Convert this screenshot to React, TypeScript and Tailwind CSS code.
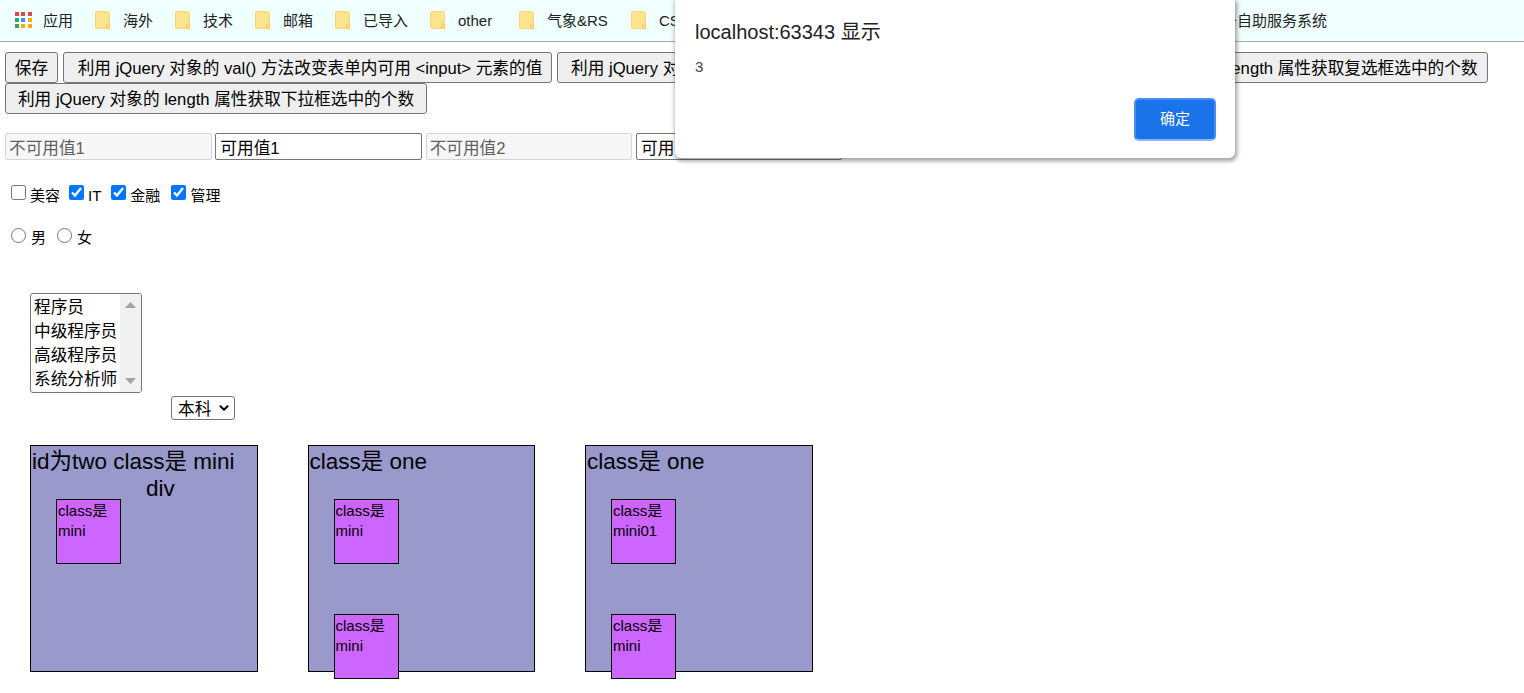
import { ChevronDown } from "lucide-react";

const cjk = "font-['Liberation_Sans','Noto_Sans_CJK_SC',sans-serif]";

const bookmarks = [
  { label: "海外", className: "w-[80px]" },
  { label: "技术", className: "w-[80px]" },
  { label: "邮箱", className: "w-[80px]" },
  { label: "已导入", className: "w-[95px]" },
  { label: "other", className: "w-[89px]" },
  { label: "气象&RS", className: "w-[112px]" },
  { label: "CS", className: "w-[60px]" },
];

function FolderIcon() {
  return (
    <svg width="15" height="18" viewBox="0 0 15 18" className="shrink-0">
      <path d="M1.5 0.5h11a2 2 0 0 1 2 2V17.5H1.5a1 1 0 0 1-1-1V1.5a1 1 0 0 1 1-1z" fill="#ffe38e" stroke="#f6d777" strokeWidth="1" />
      <path d="M11.5 17v-3a1 1 0 0 1 1-1h1a1 1 0 0 1 1 1v3z" fill="#ffe38e" stroke="#f3c95c" strokeWidth="1" />
    </svg>
  );
}

function AppsIcon() {
  const colors = ["#e8453c", "#e8453c", "#e8453c", "#3aa757", "#4a8af4", "#f9ab00", "#3aa757", "#f9ab00", "#f9ab00"];
  return (
    <div className="grid w-[17px] shrink-0 grid-cols-3 gap-[2px]">
      {colors.map((c, i) => (
        <span key={i} className="h-[4px] w-[4px]" style={{ background: c }} />
      ))}
    </div>
  );
}

function BookmarkBar() {
  return (
    <div className="flex h-[42px] items-center border-b border-[#a9aeae] bg-[#f0ffff] pb-[2px] pl-[15px] text-[15px] text-[#222]">
      <div className="flex w-[80px] items-center gap-[11px]">
        <AppsIcon />
        <span className="pt-[4px]">应用</span>
      </div>
      {bookmarks.map((b) => (
        <div key={b.label} className={`flex items-center gap-[13px] ${b.className}`}>
          <FolderIcon />
          <span className="pt-[4px]">{b.label}</span>
        </div>
      ))}
      <span className="ml-[531px] pt-[4px]">务自助服务系统</span>
    </div>
  );
}

const btn =
  "mr-[5px] h-[31px] whitespace-nowrap rounded-[3px] border border-[#767676] bg-[#efefef] pt-[3px] text-[16.67px] leading-none text-black";

function MiniBox({ lines, className = "" }: { lines: string[]; className?: string }) {
  return (
    <div className={`h-[65px] w-[65px] border border-black bg-[#cc66ff] pl-px pt-px text-[15px] leading-[20px] ${className}`}>
      {lines.map((l) => (
        <div key={l}>{l}</div>
      ))}
    </div>
  );
}

function OuterBox({ children }: { children: React.ReactNode }) {
  return (
    <div className="h-[227px] w-[227.5px] border border-black bg-[#9999cc] pt-[2px] text-[22.5px] leading-[27px]">
      {children}
    </div>
  );
}

function TextInput({ value, disabled }: { value: string; disabled?: boolean }) {
  return (
    <input
      defaultValue={value}
      disabled={disabled}
      className={
        disabled
          ? "mr-[3.83px] h-[27px] w-[206.5px] rounded-[2px] border border-[#d5d5d5] bg-[#f7f7f7] px-[3px] text-[16.67px] text-[#5f5f5f]"
          : "mr-[3.83px] h-[27px] w-[206.5px] rounded-[2px] border border-[#767676] bg-white px-[4px] text-[16.67px] text-black"
      }
    />
  );
}

function Check({ label, checked, className = "" }: { label: string; checked?: boolean; className?: string }) {
  return (
    <label className={`flex items-center ${className}`}>
      <input type="checkbox" defaultChecked={checked} className="mr-[4px] mt-[-7px] h-[15px] w-[15px] accent-[#0075ff]" />
      <span>{label}</span>
    </label>
  );
}

function Radio({ label, className = "" }: { label: string; className?: string }) {
  return (
    <label className={`flex items-center ${className}`}>
      <input type="radio" name="sex" className="mr-[5px] mt-[-5px] h-[15px] w-[15px]" />
      <span>{label}</span>
    </label>
  );
}

function ListBox() {
  return (
    <div className="relative h-[100px] w-[112px]">
      <select
        multiple
        size={4}
        className="h-[100px] w-[112px] overflow-hidden rounded-[3px] border border-[#767676] bg-white text-[16.67px]"
        defaultValue={[]}
      >
        <option className="px-[3px]">程序员</option>
        <option className="px-[3px]">中级程序员</option>
        <option className="px-[3px]">高级程序员</option>
        <option className="px-[3px]">系统分析师</option>
        <option className="px-[3px]">架构师</option>
      </select>
      {/* fake scrollbar, the headless browser hides the native one */}
      <div className="absolute bottom-px right-px top-px flex w-[21px] flex-col items-center justify-between rounded-r-[2px] bg-[#f1f1f1] py-[8px]">
        <svg width="11" height="6" viewBox="0 0 11 6">
          <path d="M5.5 0L11 6H0z" fill="#a3a3a3" />
        </svg>
        <svg width="11" height="6" viewBox="0 0 11 6">
          <path d="M5.5 6L11 0H0z" fill="#a3a3a3" />
        </svg>
      </div>
    </div>
  );
}

function AlertDialog() {
  return (
    <div className="absolute left-[675px] top-0 h-[158px] w-[560px] rounded-b-[6px] bg-white shadow-[1px_2px_4px_1px_rgba(40,40,40,0.45)]">
      <div className="pl-[20px] pt-[20px] text-[20px] leading-[24px] text-[#222]">localhost:63343 显示</div>
      <div className="pl-[20px] pt-[13px] text-[15px] leading-[20px] text-[#444]">3</div>
      <div className="flex justify-end pr-[19px] pt-[21px]">
        <button className="h-[43px] w-[82px] rounded-[5px] border-2 border-[#4a8ff0] border-b-[#8ab4f8] bg-[#1a73e8] text-[15px] text-white">
          确定
        </button>
      </div>
    </div>
  );
}

export default function App() {
  return (
    <div className={`relative h-[693px] w-[1524px] overflow-hidden bg-white text-black ${cjk}`}>
      <BookmarkBar />

      <div className="pl-[5px] pt-[10px]">
        <div className="flex">
          <button className={`${btn} w-[53px]`}>保存</button>
          <button className={`${btn} w-[489px] pl-[5px]`}>{"利用 jQuery 对象的 val() 方法改变表单内可用 <input> 元素的值"}</button>
          <button className={`${btn} w-[504px] overflow-hidden pl-[13px] text-left`}>{"利用 jQuery 对象的 val() 方法改变表单内不可用 <input> 元素的值"}</button>
          <button className={`${btn} w-[422px] pl-[5px]`}>利用 jQuery 对象的 length 属性获取复选框选中的个数</button>
        </div>
        <button className={`${btn} w-[422px]`}>利用 jQuery 对象的 length 属性获取下拉框选中的个数</button>

        <div className="mt-[19px] flex">
          <TextInput value="不可用值1" disabled />
          <TextInput value="可用值1" />
          <TextInput value="不可用值2" disabled />
          <TextInput value="可用值2" />
        </div>

        <div className="mt-[26px] flex h-[20px] pl-[6px] text-[15px] leading-[20px]">
          <Check label="美容" />
          <Check label="IT" checked className="ml-[9px]" />
          <Check label="金融" checked className="ml-[10px]" />
          <Check label="管理" checked className="ml-[11px]" />
        </div>

        <div className="mt-[22px] flex h-[20px] pl-[6px] text-[15px] leading-[20px]">
          <Radio label="男" />
          <Radio label="女" className="ml-[11px]" />
        </div>

        <div className="ml-[25px] mt-[45px] flex items-start">
          <ListBox />
          <div className="relative ml-[29px] mt-[103px]">
            <select className="h-[24px] w-[64px] appearance-none rounded-[3px] border border-[#767676] bg-white pl-[6px] text-[16.67px]">
              <option>本科</option>
            </select>
            <ChevronDown size={14} strokeWidth={3.5} className="pointer-events-none absolute right-[4px] top-[5px]" />
          </div>
        </div>

        <div className="ml-[25px] mt-[23px] flex gap-[50px]">
          <OuterBox>
            <div className="pl-px">id为two class是 mini</div>
            <div className="pl-[115px]">div</div>
            <MiniBox lines={["class是", "mini"]} className="ml-[25px] mt-[-3px]" />
          </OuterBox>
          <OuterBox>
            <div className="pl-px">class是 one</div>
            <MiniBox lines={["class是", "mini"]} className="ml-[25px] mt-[24px]" />
            <MiniBox lines={["class是", "mini"]} className="ml-[25px] mt-[50px]" />
          </OuterBox>
          <OuterBox>
            <div className="pl-px">class是 one</div>
            <MiniBox lines={["class是", "mini01"]} className="ml-[25px] mt-[24px]" />
            <MiniBox lines={["class是", "mini"]} className="ml-[25px] mt-[50px]" />
          </OuterBox>
        </div>
      </div>

      <AlertDialog />
    </div>
  );
}
